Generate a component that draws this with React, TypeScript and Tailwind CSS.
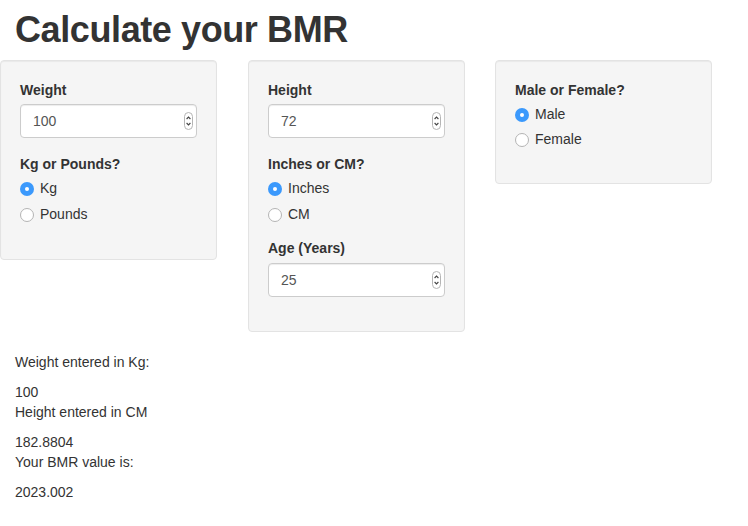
import React, { useState } from 'react';

const font = { fontFamily: '"Liberation Sans", Arial, sans-serif' };

const Spinner = () => (
  <svg width="9" height="18" viewBox="0 0 9 18" className="absolute right-[3px] top-[7px]">
    <rect x="0.5" y="0.5" width="8" height="17" rx="4" fill="#fff" stroke="#b5b5b5" />
    <path d="M2.6 7 L4.5 5 L6.4 7" fill="none" stroke="#444" strokeWidth="1.1" />
    <path d="M2.6 11 L4.5 13 L6.4 11" fill="none" stroke="#444" strokeWidth="1.1" />
  </svg>
);

const NumberField = ({ value }: { value: string }) => (
  <div className="relative h-[34px] w-full rounded-[4px] border border-[#ccc] bg-white shadow-[inset_0_1px_1px_rgba(0,0,0,0.075)]">
    <div className="px-[12px] leading-[32px] text-[14px] text-[#555]">{value}</div>
    <Spinner />
  </div>
);

interface RadioGroupProps {
  options: string[];
  selected: string;
  onSelect: (v: string) => void;
  tight?: boolean;
}

const RadioGroup: React.FC<RadioGroupProps> = ({ options, selected, onSelect, tight }) => (
  <div className={tight ? 'mt-[5px] flex flex-col gap-[5px]' : 'mt-[5px] flex flex-col gap-[6px]'}>
    {options.map((opt) => (
      <button
        key={opt}
        onClick={() => onSelect(opt)}
        className="flex h-[20px] items-center text-left text-[14px] text-[#333]"
      >
        {selected === opt ? (
          <span className="flex h-[14px] w-[14px] items-center justify-center rounded-full bg-[#3b99fc]">
            <span className="h-[4px] w-[4px] rounded-full bg-white" />
          </span>
        ) : (
          <span className="h-[14px] w-[14px] rounded-full border border-[#b4b4b4] bg-white" />
        )}
        <span className="ml-[6px]">{opt}</span>
      </button>
    ))}
  </div>
);

const Label = ({ children }: { children: React.ReactNode }) => (
  <div className="h-[20px] text-[14px] font-bold leading-[20px] text-[#333]">{children}</div>
);

const Well = ({ children, className = '' }: { children: React.ReactNode; className?: string }) => (
  <div
    className={`w-[217px] rounded-[4px] border border-[#e3e3e3] bg-[#f5f5f5] px-[19px] pt-[19px] shadow-[inset_0_1px_1px_rgba(0,0,0,0.05)] ${className}`}
  >
    {children}
  </div>
);

export default function App() {
  const [unitW, setUnitW] = useState('Kg');
  const [unitH, setUnitH] = useState('Inches');
  const [sex, setSex] = useState('Male');

  return (
    <div className="min-h-[526px] w-[748px] bg-white text-[14px] text-[#333]" style={font}>
      <h1 className="ml-[15px] mt-[10px] mb-[10px] text-[36px] font-bold leading-[1.1] tracking-[-0.4px] text-[#333]">
        Calculate your BMR
      </h1>

      <div className="flex items-start">
        <Well className="pb-[34px]">
          <Label>Weight</Label>
          <div className="mt-[4px]">
            <NumberField value="100" />
          </div>
          <div className="mt-[16px]">
            <Label>Kg or Pounds?</Label>
            <RadioGroup options={['Kg', 'Pounds']} selected={unitW} onSelect={setUnitW} />
          </div>
        </Well>

        <Well className="ml-[31px] pb-[34px]">
          <Label>Height</Label>
          <div className="mt-[4px]">
            <NumberField value="72" />
          </div>
          <div className="mt-[16px]">
            <Label>Inches or CM?</Label>
            <RadioGroup options={['Inches', 'CM']} selected={unitH} onSelect={setUnitH} />
          </div>
          <div className="mt-[13px]">
            <Label>Age (Years)</Label>
            <div className="mt-[5px]">
              <NumberField value="25" />
            </div>
          </div>
        </Well>

        <Well className="ml-[30px] pb-[33px]">
          <Label>Male or Female?</Label>
          <RadioGroup options={['Male', 'Female']} selected={sex} onSelect={setSex} tight />
        </Well>
      </div>

      <div className="mt-[20px] pl-[15px] leading-[20px]">
        <p className="mb-[10px]">Weight entered in Kg:</p>
        <div>100</div>
        <p className="mb-[10px]">Height entered in CM</p>
        <div>182.8804</div>
        <p className="mb-[10px]">Your BMR value is:</p>
        <div>2023.002</div>
      </div>
    </div>
  );
}
